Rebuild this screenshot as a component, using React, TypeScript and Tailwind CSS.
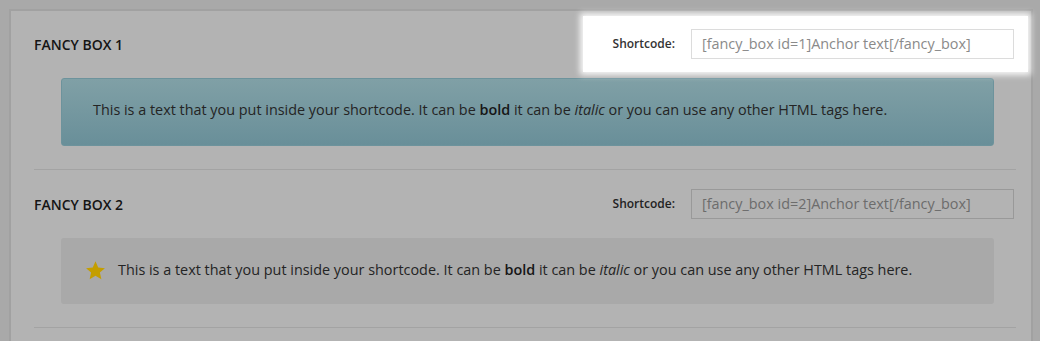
const body = "font-['Open_Sans',sans-serif]";

function ShortcodeField({ id, lit }: { id: number; lit?: boolean }) {
  return (
    <div
      className={
        lit
          ? "flex items-center -my-[13px] -mr-[12px] py-[13px] pl-[30px] pr-[14px] bg-white shadow-[0_0_6px_3px_rgba(255,255,255,0.9)]"
          : "flex items-center pr-[2px]"
      }
    >
      <span className={`text-[12px] font-semibold mr-[16px] ${lit ? "text-[#333]" : "text-[#222]"}`}>Shortcode:</span>
      <div
        className={`w-[323px] h-[30px] flex items-center px-[10px] text-[14.4px] border ${
          lit ? "border-[#dcdcdc] text-[#8a8a8a] bg-white" : "border-[#999] text-[#6c6c6c] bg-[#b3b3b3]"
        }`}
      >
        [fancy_box id={id}]Anchor text[/fancy_box]
      </div>
    </div>
  );
}

function Sample() {
  return (
    <>
      This is a text that you put inside your shortcode. It can be <b className="font-semibold text-[#161616]">bold</b> it can be{" "}
      <i>italic</i> or you can use any other HTML tags here.
    </>
  );
}

function StarIcon() {
  return (
    <svg viewBox="0 0 24 24" className="w-[21px] h-[21px] mr-[12px] -mt-[2px]">
      <polygon
        points="12,1.5 15.1,8.6 22.8,9.3 17,14.4 18.7,22 12,18 5.3,22 7,14.4 1.2,9.3 8.9,8.6"
        fill="#c49e00"
      />
    </svg>
  );
}

export default function App() {
  return (
    <div className={`w-[1040px] h-[341px] overflow-hidden bg-[#a9a9a9] pt-[9px] pl-[9px] ${body}`}>
      <div className="w-[1024px] h-[340px] bg-[#b3b3b3] border-l-2 border-t-2 border-r-2 border-[#a1a1a1] pl-[23px] pr-[15px]">
        {/* box 1 */}
        <section className="pt-[18px] pb-[23px] border-b border-[#a3a3a3]">
          <div className="flex items-center justify-between h-[30px]">
            <h3 className="text-[14px] font-semibold text-[#151515]">FANCY BOX 1</h3>
            <ShortcodeField id={1} lit />
          </div>
          <div className="mt-[19px] ml-[27px] mr-[22px] h-[68px] flex items-center pl-[31px] rounded-[3px] border border-[#6d939c] bg-gradient-to-b from-[#80a0a6] to-[#698f99] text-[14.4px] text-[#242424]">
            <p className="-mt-[4px]">
              <Sample />
            </p>
          </div>
        </section>

        {/* box 2 */}
        <section className="pt-[19px] pb-[23px] border-b border-[#a3a3a3]">
          <div className="flex items-center justify-between h-[30px]">
            <h3 className="text-[14px] font-semibold text-[#151515]">FANCY BOX 2</h3>
            <ShortcodeField id={2} />
          </div>
          <div className="mt-[19px] ml-[27px] mr-[22px] h-[66px] flex items-center pl-[24px] rounded-[3px] bg-[#a9a9a9] text-[14.4px] text-[#242424]">
            <StarIcon />
            <p className="-mt-[3px]">
              <Sample />
            </p>
          </div>
        </section>
      </div>
    </div>
  );
}
